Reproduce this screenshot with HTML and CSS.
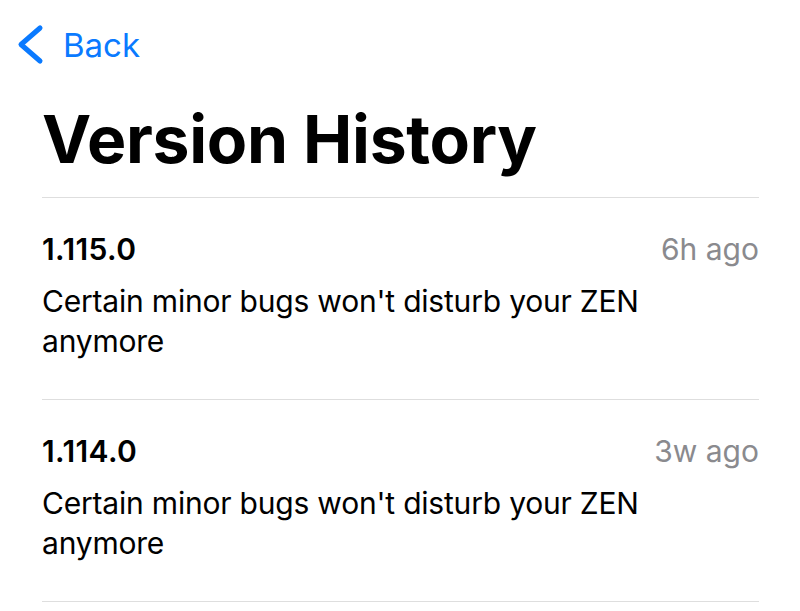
FILE: index.html
```html
<!DOCTYPE html>
<html lang="en">
<head>
    <meta charset="UTF-8">
    <meta name="viewport" content="width=device-width, initial-scale=1.0">
    <title>Version History</title>
    <link rel="stylesheet" href="styles.css">
</head>
<body>
    <nav class="nav">
        <a class="back" href="#">
            <svg class="chevron" width="28" height="42" viewBox="0 0 28 42">
                <polyline points="23,4 4,20.5 23,37" fill="none" stroke="currentColor" stroke-width="5" stroke-linecap="round" stroke-linejoin="round"/>
            </svg>
            <span>Back</span>
        </a>
    </nav>

    <main class="page">
        <h1 class="title">Version History</h1>

        <ul class="versions">
            <li class="version">
                <div class="version-head">
                    <span class="version-number">1.115.0</span>
                    <span class="version-date">6h ago</span>
                </div>
                <p class="version-notes">Certain minor bugs won't disturb your ZEN anymore</p>
            </li>
            <li class="version">
                <div class="version-head">
                    <span class="version-number">1.114.0</span>
                    <span class="version-date">3w ago</span>
                </div>
                <p class="version-notes">Certain minor bugs won't disturb your ZEN anymore</p>
            </li>
        </ul>
    </main>
</body>
</html>
```

FILE: styles.css
```css
body {
    font-family: Inter, "Noto Sans", sans-serif;
    margin: 0;
    padding: 0;
    background-color: #fff;
    color: #000;
}
.nav {
    padding: 25px 0 0 17px;
}
.back {
    display: flex;
    align-items: center;
    gap: 18px;
    height: 40px;
    color: #0a7aff;
    text-decoration: none;
    font-size: 33px;
    line-height: 40px;
}
.chevron {
    display: block;
}
.page {
    padding: 0 41px 0 42px;
}
.title {
    margin: 34px 0 18px;
    font-size: 66px;
    line-height: 80px;
    font-weight: 700;
    letter-spacing: -0.3px;
}
.versions {
    list-style: none;
    margin: 0;
    padding: 0;
    border-top: 1px solid #dedede;
}
.version {
    padding: 33px 0 38px;
    border-bottom: 1px solid #dedede;
}
.version-head {
    display: flex;
    justify-content: space-between;
    align-items: baseline;
    line-height: 36px;
}
.version-number {
    font-size: 30px;
    font-weight: 600;
    letter-spacing: 0.4px;
}
.version-date {
    font-size: 30px;
    color: #8a8a8e;
}
.version-notes {
    margin: 14px 0 0;
    font-size: 30px;
    line-height: 40px;
    letter-spacing: -0.2px;
    max-width: 620px;
}
```
